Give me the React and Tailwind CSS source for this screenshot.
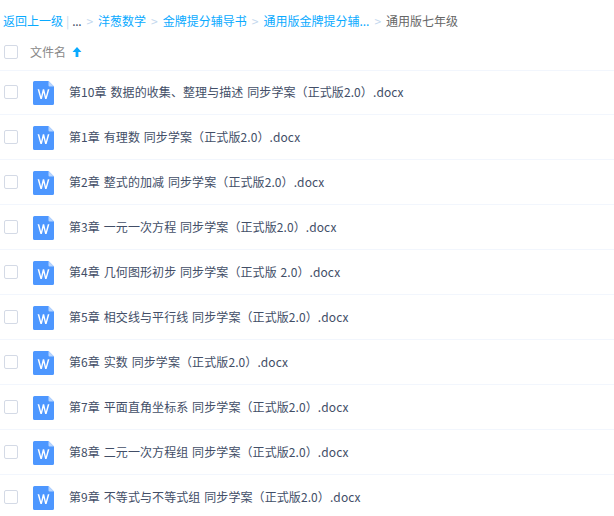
const files = [
  "第10章 数据的收集、整理与描述 同步学案（正式版2.0）.docx",
  "第1章 有理数 同步学案（正式版2.0）.docx",
  "第2章 整式的加减 同步学案（正式版2.0）.docx",
  "第3章 一元一次方程 同步学案（正式版2.0）.docx",
  "第4章 几何图形初步 同步学案（正式版 2.0）.docx",
  "第5章 相交线与平行线 同步学案（正式版2.0）.docx",
  "第6章 实数 同步学案（正式版2.0）.docx",
  "第7章 平面直角坐标系 同步学案（正式版2.0）.docx",
  "第8章 二元一次方程组 同步学案（正式版2.0）.docx",
  "第9章 不等式与不等式组 同步学案（正式版2.0）.docx",
];

const crumbs = ["洋葱数学", "金牌提分辅导书", "通用版金牌提分辅..."];

function WordIcon() {
  return (
    <svg width="21" height="24" viewBox="0 0 21 24" className="shrink-0">
      <path d="M1.5 0H15.5L21 5.5V22.5A1.5 1.5 0 0 1 19.5 24H1.5A1.5 1.5 0 0 1 0 22.5V1.5A1.5 1.5 0 0 1 1.5 0Z" fill="#4d97ff" />
      <path d="M15.5 0L21 5.5H16.5A1 1 0 0 1 15.5 4.5Z" fill="#b8d5ff" />
      <path d="M4.6 8.2L7.4 18H8.9L10.5 11.6L12.1 18H13.6L16.4 8.2H14.8L12.9 15.4L11.2 8.2H9.8L8.1 15.4L6.2 8.2Z" fill="#fff" />
    </svg>
  );
}

function Checkbox() {
  return <div className="w-[14px] h-[14px] rounded-[2px] border border-[#d4dae6] bg-white shrink-0" />;
}

function Row({ name }) {
  return (
    <div className="flex items-center h-[45px] border-b border-[#f2f6fd] pl-1">
      <Checkbox />
      <div className="ml-[15px] mt-[2px]">
        <WordIcon />
      </div>
      <span className="ml-[15px] text-[12px] tracking-[0.09px] [word-spacing:1px] text-[#424e67]">{name}</span>
    </div>
  );
}

export default function App() {
  return (
    <div className="w-[614px] h-[516px] overflow-hidden bg-white font-['Noto_Sans_CJK_SC','Liberation_Sans',sans-serif]">
      <div className="flex items-center h-[30px] pt-[11px] pl-[3px] text-[12px] whitespace-nowrap">
        <span className="text-[#09aaff]">返回上一级</span>
        <span className="ml-[3px] mr-[3px] text-[#c4d8ee]">|</span>
        <span className="text-[#424e67] tracking-[-0.3px]">...</span>
        {crumbs.map((c) => (
          <span key={c} className="flex items-center">
            <span className="mx-[5px] text-[#c4d8ee]">&gt;</span>
            <span className="text-[#09aaff]">{c}</span>
          </span>
        ))}
        <span className="mx-[5px] text-[#c4d8ee]">&gt;</span>
        <span className="text-[#666]">通用版七年级</span>
      </div>
      <div className="flex items-center h-[41px] pt-[4px] border-b border-[#f2f6fd] pl-1">
        <Checkbox />
        <span className="ml-3 text-[12px] text-[#888]">文件名</span>
        <svg width="10" height="10" viewBox="0 0 10 10" className="ml-[6px]">
          <path d="M5 0L9.5 5H6.4V10H3.6V5H0.5Z" fill="#09aaff" />
        </svg>
      </div>
      <div className="-mt-px">
        {files.map((f) => (
          <Row key={f} name={f} />
        ))}
      </div>
    </div>
  );
}
